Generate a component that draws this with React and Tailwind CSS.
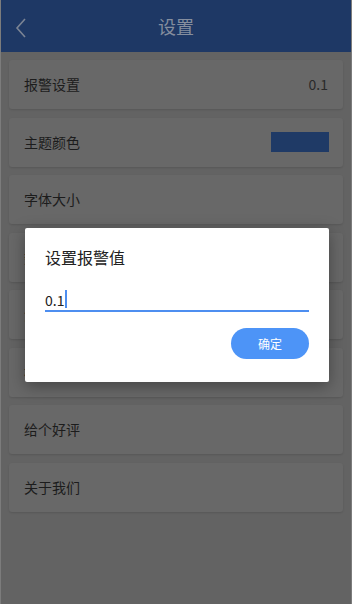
import { useState } from "react";

const rows = [
  { label: "报警设置", value: "0.1" },
  { label: "主题颜色", swatch: true },
  { label: "字体大小" },
  { label: "数据单位" },
  { label: "清除缓存" },
  { label: "检查更新" },
  { label: "给个好评" },
  { label: "关于我们" },
];

const SettingRow = ({ label, value, swatch }) => {
  return (
    <div className="h-[49px] mx-2 px-[15px] flex items-center justify-between bg-[#686868] rounded-[3px] shadow-[0_1px_2px_rgba(0,0,0,0.12)]">
      <span className="text-[14px] text-[#1c1c1c]">{label}</span>
      {value ? <span className="text-[14px] text-[#2a2a2a]">{value}</span> : ""}
      {swatch ? <div className="w-[58px] h-[20px] bg-[#1f3a66] mr-[-1px]" /> : ""}
    </div>
  );
};

const App = () => {
  const [alarm, setAlarm] = useState("0.1");

  return (
    <div
      className="relative w-[352px] h-[604px] overflow-hidden bg-[#636363] border-x border-[#7c7c7c]"
      style={{ fontFamily: '"Noto Sans CJK SC", "Noto Sans", sans-serif' }}
    >
      {/* header */}
      <div className="h-[52px] bg-[#1e3865] flex items-center relative">
        <svg className="absolute left-[13px] top-[17px]" width="14" height="22" viewBox="0 0 14 22" fill="none">
          <path d="M11 2 L3 11 L11 20" stroke="#7b8494" strokeWidth="1.6" />
        </svg>
        <h1 className="w-full text-center text-[18px] text-[#858e9e] leading-none">设置</h1>
      </div>

      {/* list */}
      <div className="flex flex-col gap-[8.5px] pt-[8px]">
        {rows.map((row, index) => (
          <SettingRow key={index} {...row} />
        ))}
      </div>

      {/* dialog */}
      <div className="absolute left-[24px] top-[228px] w-[304px] h-[154px] bg-white rounded-[2px] shadow-[0_4px_16px_rgba(0,0,0,0.35)] px-[20px] pt-[21px]">
        <h2 className="text-[16px] text-[#222] leading-none">设置报警值</h2>
        <div className="mt-[15px] border-b-2 border-[#4d8ef0] h-[32px] flex items-end pb-[3px]">
          <span className="text-[14px] text-[#222] leading-none">{alarm}</span>
          <span className="w-[2px] h-[18px] bg-[#4d8ef0] ml-[1px] mb-[-1px]" />
        </div>
        <div className="flex justify-end mt-[16px]">
          <button
            onClick={() => setAlarm(alarm)}
            className="w-[78px] h-[31px] rounded-full bg-[#4d94f7] text-white text-[12px]"
          >
            确定
          </button>
        </div>
      </div>
    </div>
  );
};

export default App;
